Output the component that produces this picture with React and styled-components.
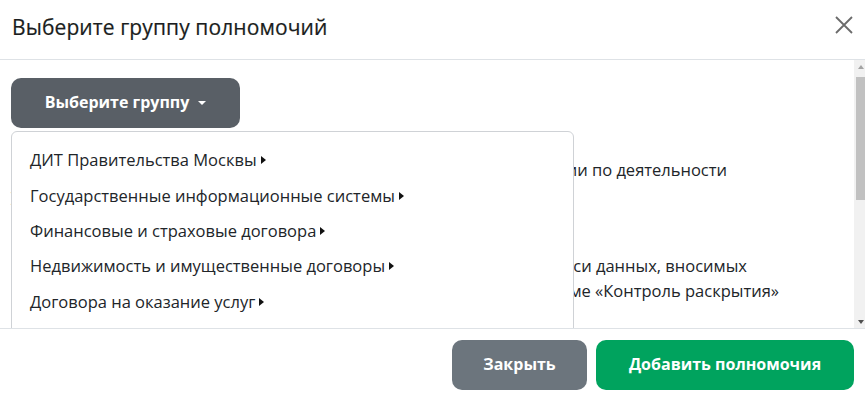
import React from "react";
import styled, { createGlobalStyle } from "styled-components";

const GlobalStyle = createGlobalStyle`
  html, body {
    margin: 0;
    padding: 0;
    background: #ffffff;
  }
  body {
    font-family: "Open Sans", "Noto Sans", sans-serif;
    color: #212529;
  }
  * {
    box-sizing: border-box;
  }
`;

const Modal = styled.div`
  width: 865px;
  height: 404px;
  display: flex;
  flex-direction: column;
  background: #ffffff;
  overflow: hidden;
`;

const Header = styled.div`
  height: 60px;
  flex: none;
  display: flex;
  align-items: center;
  justify-content: space-between;
  padding: 0 11px 0 12px;
  border-bottom: 1px solid #dee2e6;
`;

const Title = styled.h5`
  margin: 0 0 4px 0;
  font-size: 21px;
  font-weight: 500;
  line-height: 1.2;
  color: #1a1d20;
  letter-spacing: 0.1px;
  -webkit-text-stroke: 0.2px #1a1d20;
`;

const CloseButton = styled.button`
  width: 20px;
  height: 20px;
  padding: 0;
  border: 0;
  background: transparent;
  display: flex;
  align-items: center;
  justify-content: center;
  cursor: pointer;
  margin: 0 0 9px 0;
`;

const Body = styled.div`
  flex: 1;
  min-height: 0;
  display: flex;
`;

const ScrollArea = styled.div`
  flex: 1;
  overflow: hidden;
  padding: 18px 0 0 11px;
`;

const Scrollbar = styled.div`
  width: 11px;
  flex: none;
  background: #f1f1f1;
  display: flex;
  flex-direction: column;
`;

const ScrollArrow = styled.div`
  height: 16px;
  flex: none;
  display: flex;
  align-items: center;
  padding-left: 4px;

  &::before {
    content: "";
    width: 0;
    height: 0;
    border-left: 3.5px solid transparent;
    border-right: 3.5px solid transparent;
    ${(p) =>
      p.$down
        ? "border-top: 4px solid #505050; margin-top: 4px;"
        : "border-bottom: 4px solid #a3a3a3; margin-top: -2px;"}
  }
`;

const Thumb = styled.div`
  height: 123px;
  margin: 1px 0 0 2px;
  background: #c1c1c1;
`;

const Spacer = styled.div`
  flex: 1;
`;

const Content = styled.div`
  position: relative;
`;

const DropdownWrap = styled.div`
  position: relative;
  display: inline-block;
  z-index: 2;
`;

const DropdownButton = styled.button`
  height: 50px;
  width: 229px;
  border: 0;
  border-radius: 10px;
  background: #595f66;
  color: #ffffff;
  font-family: inherit;
  font-size: 16px;
  font-weight: 700;
  display: flex;
  align-items: center;
  justify-content: center;
  gap: 9px;
  padding: 0 0 2px 0;
  cursor: pointer;
`;

const Caret = styled.span`
  width: 0;
  height: 0;
  border-left: 4px solid transparent;
  border-right: 4px solid transparent;
  border-top: 4px solid #ffffff;
  margin-top: 2px;
`;

const Menu = styled.ul`
  position: absolute;
  top: 53px;
  left: 0;
  width: 563px;
  margin: 0;
  padding: 10px 0 8px 0;
  list-style: none;
  background: #ffffff;
  border: 1px solid #cfd2d6;
  border-radius: 6px;
`;

const MenuItem = styled.li`
  height: 35.4px;
  display: flex;
  align-items: center;
  padding: 0 18px;
  font-size: 16.5px;
  color: #212529;
  white-space: nowrap;
  gap: 4px;
`;

const Arrow = styled.span`
  width: 0;
  height: 0;
  border-top: 4px solid transparent;
  border-bottom: 4px solid transparent;
  border-left: 5px solid #111;
  margin-top: 1px;
`;

const Paragraph = styled.div`
  margin-top: ${(p) => p.$gap};
`;

const Line = styled.div`
  width: ${(p) => (p.$end ? `${p.$end - 11}px` : "auto")};
  text-align: ${(p) => (p.$end ? "right" : "left")};
  font-size: 16.5px;
  line-height: 25px;
  color: #212529;
  white-space: nowrap;
`;

const Footer = styled.div`
  height: 76px;
  flex: none;
  border-top: 1px solid #dee2e6;
  display: flex;
  align-items: center;
  justify-content: flex-end;
  gap: 9px;
  padding: 0 11px 3px 0;
`;

const ActionButton = styled.button`
  height: 50px;
  width: ${(p) => p.$width};
  border: 0;
  border-radius: 10px;
  background: ${(p) => p.$bg};
  color: #ffffff;
  font-family: inherit;
  font-size: 16px;
  font-weight: 700;
  padding: 0 0 2px 0;
  cursor: pointer;
`;

const items = [
  "ДИТ Правительства Москвы",
  "Государственные информационные системы",
  "Финансовые и страховые договора",
  "Недвижимость и имущественные договоры",
  "Договора на оказание услуг",
  "Акты и документы по результатам выполненных работ",
  "Прочие полномочия",
];

export default function App() {
  return (
    <>
      <GlobalStyle />
      <Modal>
        <Header>
          <Title>Выберите группу полномочий</Title>
          <CloseButton aria-label="Закрыть">
            <svg width="18" height="18" viewBox="0 0 18 18">
              <path d="M1 1 L17 17 M17 1 L1 17" stroke="#6b6b6b" strokeWidth="1.8" fill="none" />
            </svg>
          </CloseButton>
        </Header>
        <Body>
          <ScrollArea>
            <Content>
              <DropdownWrap>
                <DropdownButton>
                  Выберите группу
                  <Caret />
                </DropdownButton>
                <Menu>
                  {items.map((item) => (
                    <MenuItem key={item}>
                      {item}
                      <Arrow />
                    </MenuItem>
                  ))}
                </Menu>
              </DropdownWrap>
              <Paragraph $gap="29px">
                <Line $end={727}>
                  Выбранная группа полномочий даёт доступ к информации по деятельности
                </Line>
                <Line>учреждения и его подведомственных организаций</Line>
              </Paragraph>
              <Paragraph $gap="46px">
                <Line $end={747}>
                  Полномочия дают право на просмотр и подтверждение записи данных, вносимых
                </Line>
                <Line $end={779}>
                  пользователями организации и учреждений в системе «Контроль раскрытия»
                </Line>
              </Paragraph>
            </Content>
          </ScrollArea>
          <Scrollbar>
            <ScrollArrow />
            <Thumb />
            <Spacer />
            <ScrollArrow $down />
          </Scrollbar>
        </Body>
        <Footer>
          <ActionButton $bg="#6c757d" $width="135px">
            Закрыть
          </ActionButton>
          <ActionButton $bg="#00a35e" $width="258px">
            Добавить полномочия
          </ActionButton>
        </Footer>
      </Modal>
    </>
  );
}
